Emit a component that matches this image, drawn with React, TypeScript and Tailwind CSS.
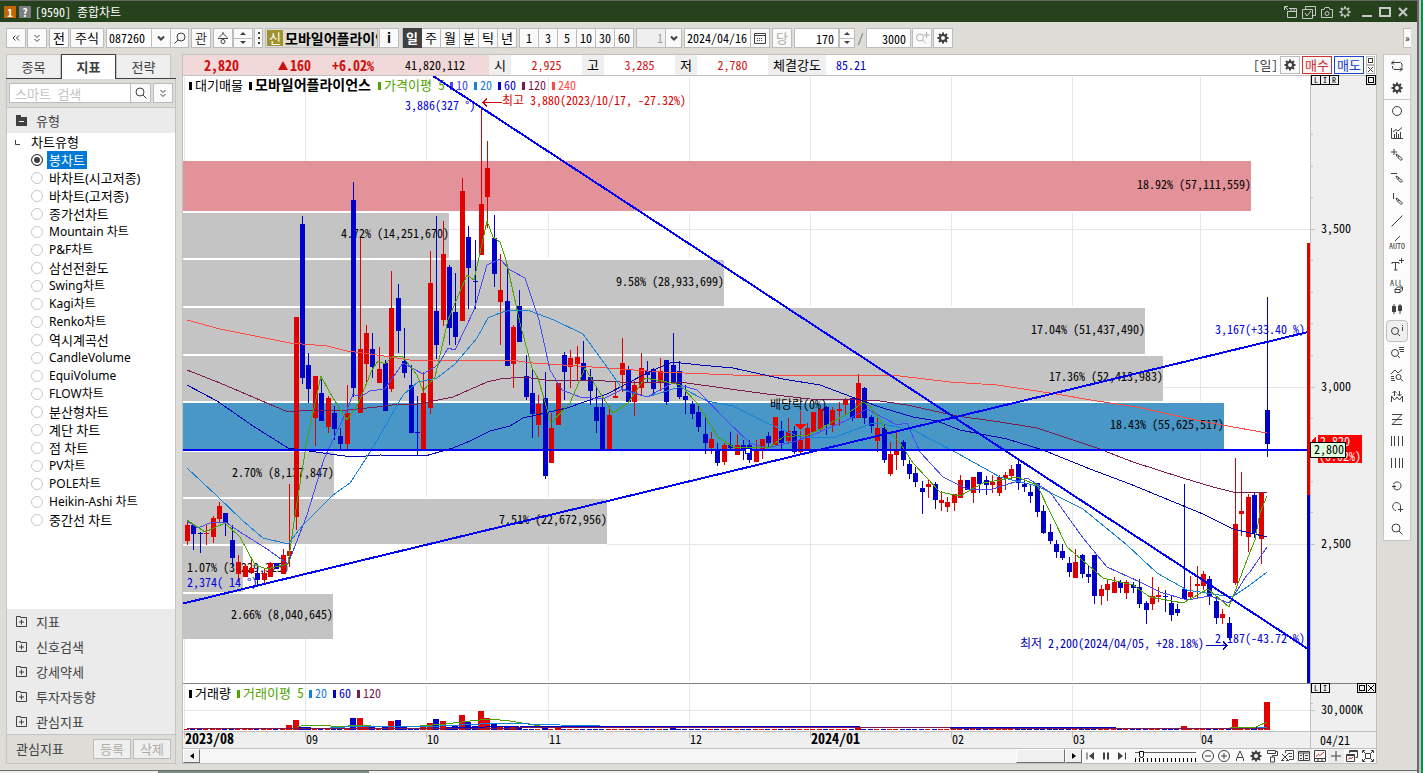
import { useState } from 'react';
import type { ReactNode } from 'react';
import clsx from 'clsx';

const INK = '#404040';
const UP = '#e00000';
const DOWN = '#0000c8';

const chartTypes = [
  '봉차트',
  '바차트(시고저종)',
  '바차트(고저종)',
  '종가선차트',
  'Mountain 차트',
  'P&F차트',
  '삼선전환도',
  'Swing차트',
  'Kagi차트',
  'Renko차트',
  '역시계곡선',
  'CandleVolume',
  'EquiVolume',
  'FLOW차트',
  '분산형차트',
  '계단 차트',
  '점 차트',
  'PV차트',
  'POLE차트',
  'Heikin-Ashi 차트',
  '중간선 차트',
];

const folders = ['지표', '신호검색', '강세약세', '투자자동향', '관심지표'];

// [up, body top, body bottom, high, low]
type Candle = [number, number, number, number, number];

const candles: Candle[] = [
  [1, 525, 541, 522, 545], [0, 525, 534, 525, 550], [0, 533, 534, 532, 553], [1, 533, 534, 525, 545], [1, 518, 537, 516, 543],
  [1, 506, 519, 502, 522], [0, 513, 523, 513, 536], [0, 540, 558, 525, 566], [1, 562, 574, 555, 582], [1, 566, 577, 565, 577],
  [1, 568, 573, 560, 574], [0, 573, 580, 569, 587], [1, 573, 580, 569, 583], [1, 563, 577, 562, 577], [0, 563, 569, 563, 569],
  [1, 555, 574, 549, 574], [1, 551, 556, 484, 567], [1, 317, 517, 317, 530], [0, 224, 378, 216, 384], [0, 365, 389, 353, 403],
  [1, 376, 418, 376, 446], [0, 393, 421, 379, 421], [1, 398, 427, 396, 433], [0, 413, 429, 406, 440], [0, 436, 444, 428, 449],
  [1, 413, 444, 385, 449], [0, 200, 388, 182, 397], [1, 349, 413, 238, 413], [1, 333, 364, 325, 383], [0, 349, 367, 333, 378],
  [1, 369, 383, 347, 383], [0, 363, 411, 360, 411], [1, 308, 389, 271, 392], [0, 298, 331, 284, 353], [0, 361, 373, 328, 378],
  [0, 385, 433, 365, 433], [0, 432, 433, 396, 455], [1, 393, 449, 372, 449], [1, 283, 408, 251, 414], [0, 311, 345, 216, 359],
  [1, 254, 320, 221, 326], [0, 267, 328, 265, 345], [0, 312, 337, 273, 345], [1, 191, 321, 178, 321], [0, 237, 268, 226, 309],
  [0, 281, 282, 240, 309], [1, 204, 255, 108, 255], [1, 168, 197, 141, 228], [0, 238, 274, 215, 287], [1, 290, 302, 254, 345],
  [0, 301, 366, 268, 366], [1, 327, 364, 325, 388], [0, 306, 342, 290, 342], [0, 376, 397, 355, 400], [0, 393, 414, 369, 438],
  [1, 404, 425, 395, 437], [0, 398, 476, 372, 479], [1, 428, 463, 413, 463], [1, 383, 425, 383, 425], [0, 355, 372, 352, 400],
  [1, 358, 367, 350, 388], [1, 357, 364, 346, 380], [0, 363, 380, 341, 380], [0, 377, 391, 369, 405], [0, 407, 421, 387, 433],
  [0, 407, 450, 399, 450], [1, 415, 450, 406, 450], [1, 396, 398, 382, 398], [1, 363, 375, 338, 392], [0, 370, 402, 366, 402],
  [1, 385, 402, 381, 416], [1, 368, 388, 353, 396], [0, 371, 375, 361, 382], [0, 369, 389, 368, 394], [1, 371, 382, 358, 391],
  [0, 360, 402, 360, 405], [0, 365, 382, 333, 382], [0, 371, 397, 361, 399], [0, 396, 400, 385, 414], [0, 404, 414, 401, 419],
  [0, 412, 427, 406, 432], [0, 434, 443, 417, 454], [1, 439, 448, 432, 454], [0, 450, 463, 443, 466], [1, 445, 462, 443, 465],
  [0, 445, 448, 432, 450], [1, 445, 455, 434, 455], [0, 445, 450, 440, 460], [0, 445, 460, 440, 463], [1, 450, 462, 440, 462],
  [1, 439, 450, 439, 459], [0, 436, 443, 432, 447], [1, 417, 445, 417, 445], [0, 431, 443, 421, 449], [1, 431, 441, 418, 443],
  [0, 431, 452, 426, 454], [1, 440, 452, 431, 454], [1, 428, 449, 423, 449], [1, 412, 432, 412, 432], [1, 409, 429, 409, 432],
  [0, 407, 425, 406, 435], [1, 410, 425, 407, 432], [1, 409, 411, 402, 426], [1, 400, 405, 398, 414], [0, 398, 418, 398, 421],
  [1, 383, 418, 374, 418], [0, 388, 418, 387, 424], [0, 417, 426, 415, 433], [1, 428, 441, 418, 452], [0, 428, 460, 425, 463],
  [1, 454, 474, 442, 476], [1, 450, 455, 432, 470], [0, 442, 460, 440, 466], [0, 464, 474, 460, 479], [0, 473, 482, 467, 487],
  [0, 488, 492, 481, 514], [1, 484, 487, 480, 498], [0, 484, 500, 482, 509], [1, 500, 503, 491, 511], [1, 502, 507, 497, 512],
  [1, 494, 503, 494, 511], [1, 480, 498, 475, 498], [0, 480, 490, 480, 490], [1, 477, 493, 477, 503], [0, 472, 484, 472, 493],
  [0, 480, 485, 476, 495], [1, 482, 485, 475, 493], [1, 477, 493, 475, 496], [1, 475, 478, 472, 490], [1, 469, 476, 465, 480],
  [0, 464, 483, 461, 490], [0, 484, 487, 478, 492], [0, 492, 496, 485, 503], [0, 483, 512, 483, 517], [0, 511, 533, 505, 534],
  [0, 532, 541, 524, 544], [0, 544, 552, 540, 558], [0, 551, 558, 544, 560], [0, 563, 572, 557, 577], [1, 562, 578, 549, 578],
  [0, 555, 574, 554, 578], [0, 574, 577, 565, 583], [0, 555, 596, 555, 604], [1, 589, 596, 585, 605], [1, 584, 590, 579, 601],
  [1, 582, 593, 577, 593], [0, 582, 588, 580, 593], [1, 582, 593, 580, 599], [0, 585, 588, 582, 593], [0, 587, 604, 579, 608],
  [0, 603, 610, 601, 624], [1, 596, 604, 577, 610], [1, 595, 597, 587, 602], [0, 596, 597, 590, 612], [0, 603, 615, 596, 621],
  [0, 609, 613, 604, 616], [0, 589, 599, 484, 599], [1, 592, 597, 576, 598], [1, 584, 586, 566, 599], [1, 574, 586, 571, 590],
  [0, 579, 597, 576, 605], [0, 601, 618, 597, 624], [1, 614, 618, 609, 624], [0, 623, 638, 617, 640], [1, 524, 583, 458, 585],
  [1, 511, 514, 472, 536], [1, 497, 537, 494, 552], [0, 495, 533, 492, 538], [1, 493, 539, 493, 564], [0, 410, 444, 297, 457],
];

const candleX = (i: number) => Math.round(187 + i * 6.39);

// volume bar heights, every other day is a flat 1px bar
const volumes: Record<number, number> = {
  16: 5, 17: 10, 18: 3, 19: 3, 25: 2, 26: 12, 27: 12, 28: 5, 29: 3, 31: 3, 32: 9, 33: 10, 34: 3,
  37: 3, 38: 7, 39: 11, 40: 9, 41: 3, 42: 4, 43: 15, 44: 8, 45: 4, 46: 19, 47: 12, 48: 6, 49: 4, 50: 4,
  51: 3, 52: 3, 56: 4, 58: 4, 76: 3, 105: 2, 156: 4, 164: 11, 167: 3, 169: 28,
};

// days that closed below their open but above the previous close
const gapUpDays = [156, 169];

const averages = [
  { color: '#ff4a44', points: '187,320 220,329 290,343 327,346 347,351 377,355 410,360 510,360 533,363 607,368 660,372 733,375 877,375 900,376 950,382 997,385 1050,393 1097,401 1137,407 1200,421 1250,430 1267,433' },
  { color: '#7b1c4f', points: '187,370 220,383 288,412 313,410 347,410 377,407 400,404 418,404 453,397 487,382 500,379 523,377 553,381 590,380 620,382 680,382 730,389 767,394 810,399 860,400 880,401 907,405 957,416 1000,422 1037,428 1097,448 1133,462 1183,478 1213,487 1233,492 1267,492' },
  { color: '#0000b4', points: '187,385 217,401 253,426 288,448 330,454 352,457 380,455 425,456 453,448 470,441 490,431 510,426 523,418 567,408 607,394 647,373 672,362 700,365 733,368 783,379 820,385 860,400 883,408 913,417 937,421 960,430 1007,439 1043,450 1090,469 1130,484 1203,514 1233,529 1267,537' },
  { color: '#1482d8', points: '187,468 217,496 243,521 263,538 288,544 303,525 333,495 350,483 367,457 383,430 403,395 418,382 437,378 455,364 477,338 488,318 500,313 510,310 530,311 554,320 583,334 607,367 623,390 647,397 680,387 707,401 733,406 767,423 800,437 833,438 870,424 877,423 913,430 957,453 1000,477 1037,486 1083,509 1127,545 1157,573 1187,590 1232,597 1250,585 1267,572' },
  { color: '#4848f4', points: '187,521 198,528 212,522 227,523 240,532 267,549 288,564 307,515 324,459 347,410 353,394 360,397 370,391 385,389 403,363 423,374 438,365 448,348 455,350 474,310 487,265 500,259 510,270 525,278 539,320 550,370 562,390 580,397 603,399 623,389 647,397 673,383 697,390 727,421 750,443 767,448 793,442 813,435 847,420 867,409 897,425 907,423 920,452 943,477 967,489 993,489 1027,478 1050,492 1083,538 1107,567 1140,582 1160,592 1187,600 1210,596 1229,603 1247,575 1250,572 1267,547' },
  { color: '#4ea200', points: '187,520 205,532 225,523 240,537 255,565 267,569 288,564 295,515 307,440 321,376 330,393 347,420 358,404 372,370 378,361 385,364 393,356 403,357 417,375 423,391 435,377 448,320 467,275 474,280 487,221 493,237 500,242 506,260 520,323 532,368 538,378 551,423 570,403 585,368 600,393 613,413 628,403 645,378 667,382 680,385 697,403 718,437 733,447 770,447 783,437 808,435 820,429 850,412 863,402 870,406 887,430 900,443 913,463 940,492 960,496 983,483 1017,477 1037,485 1067,547 1103,578 1133,585 1150,597 1183,603 1208,589 1229,607 1242,573 1250,552 1255,540 1260,513 1267,496' },
];

const profile = [
  { y: 161, h: 50, end: 1251, fill: '#e4929a', label: '18.92% (57,111,559)' },
  { y: 213, h: 45, end: 449, fill: '#c4c4c4', label: '4.72% (14,251,670)' },
  { y: 260, h: 46, end: 724, fill: '#c4c4c4', label: '9.58% (28,933,699)' },
  { y: 308, h: 46, end: 1145, fill: '#c4c4c4', label: '17.04% (51,437,490)' },
  { y: 356, h: 45, end: 1163, fill: '#c4c4c4', label: '17.36% (52,413,983)' },
  { y: 403, h: 46, end: 1224, fill: '#4897c7', label: '18.43% (55,625,517)' },
  { y: 452, h: 45, end: 334, fill: '#c4c4c4', label: '2.70% (8,137,847)' },
  { y: 499, h: 45, end: 607, fill: '#c4c4c4', label: '7.51% (22,672,956)' },
  { y: 546, h: 46, end: 243, fill: '#c4c4c4', label: '1.07% (3,229,325)' },
  { y: 594, h: 45, end: 333, fill: '#c4c4c4', label: '2.66% (8,040,645)' },
];

const months = [
  { x: 184, label: '2023/08', bold: true },
  { x: 305, label: '09' },
  { x: 426, label: '10' },
  { x: 548, label: '11' },
  { x: 689, label: '12' },
  { x: 810, label: '2024/01', bold: true },
  { x: 951, label: '02' },
  { x: 1072, label: '03' },
  { x: 1200, label: '04' },
];

interface LegendItem {
  x: number;
  label: string;
  color: string;
  size?: number;
  bold?: boolean;
}

const priceLegend: LegendItem[] = [
  { x: 189, label: '대기매물', color: '#000000', size: 13 },
  { x: 249, label: '모바일어플라이언스', color: '#000000', size: 14, bold: true },
  { x: 378, label: '가격이평 5', color: '#4ea200', size: 13 },
  { x: 450, label: '10', color: '#4848f4' },
  { x: 474, label: '20', color: '#1482d8' },
  { x: 498, label: '60', color: '#0000c8' },
  { x: 522, label: '120', color: '#7b1c4f' },
  { x: 552, label: '240', color: '#ff4a44' },
];

const volumeLegend: LegendItem[] = [
  { x: 189, label: '거래량', color: '#000000', size: 13 },
  { x: 237, label: '거래이평 5', color: '#4ea200', size: 13 },
  { x: 309, label: '20', color: '#1482d8' },
  { x: 333, label: '60', color: '#0000c8' },
  { x: 357, label: '120', color: '#7b1c4f' },
];

const Legend = ({ items, y }: { items: LegendItem[]; y: number }) => (
  <g>
    {items.map((item) => (
      <g key={item.label} fill={item.color}>
        <rect x={item.x} y={y - 8} width="3" height="8" />
        <text x={item.x + 6} y={y} fontSize={item.size ?? 12} fontWeight={item.bold ? 700 : 400}>
          {item.label}
        </text>
      </g>
    ))}
  </g>
);

const PriceChart = () => (
  <svg viewBox="183 76 1193 607" className="block h-auto w-full" fontSize="12" shapeRendering="crispEdges" role="img" aria-label="모바일어플라이언스 일봉">
    <rect x="183" y="76" width="1127" height="607" fill="#fff" />
    <g fill="#e6e6e6">
      {months.map((m) => (
        <rect key={m.x} x={m.x} y="77" width="1" height="604" />
      ))}
      {[229, 387, 544].map((y) => (
        <rect key={y} x="183" y={y} width="1127" height="1" />
      ))}
    </g>

    {profile.map((bar) => (
      <rect key={bar.y} x="183" y={bar.y} width={bar.end - 183} height={bar.h} fill={bar.fill} />
    ))}
    {profile.slice(1).map((bar, i) => (
      <rect key={bar.y} x="183" y={bar.y - 2} width={Math.max(bar.end, profile[i].end) - 183} height="2" fill="#fff" />
    ))}
    {profile.map((bar) => (
      <text key={bar.label} x={Math.max(bar.end, 289)} y={Math.floor(bar.y + bar.h / 2) + 3} textAnchor="end">
        {bar.label}
      </text>
    ))}

    <Legend items={priceLegend} y={90} />

    {candles.map(([up, top, bottom, high, low], i) => (
      <g key={i} fill={up ? UP : DOWN}>
        <rect x={candleX(i)} y={high} width="1" height={low - high} />
        <rect x={candleX(i) - 2} y={top} width="5" height={bottom - top} />
      </g>
    ))}
    {averages.map((line) => (
      <polyline key={line.color} points={line.points} fill="none" stroke={line.color} strokeWidth="1" />
    ))}

    <g stroke="#0000fa" strokeWidth="2">
      <path d="M183 450H1308" />
      <path d="M183 603.5L1308 332" />
      <path d="M433 76L1308 649" />
    </g>
    <rect x="745" y="448" width="5" height="5" fill="#fff" stroke="#0000fa" />

    <g fill="#0000e0">
      <text x="405" y="110">3,886(327 °)</text>
      <text x="187" y="587">2,374( 14 °)</text>
      <text x="1215" y="334">3,167(+33.40 %)</text>
      <text x="1215" y="643">2,187(-43.72 %)</text>
    </g>
    <text x="502" y="105" fill="#d80000">최고 3,880(2023/10/17, -27.32%)</text>
    <path d="M502 102.500H483M487 98.500L483 102.500L487 106.500" fill="none" stroke="#d80000" />
    <text x="1020" y="648" fill="#0000b4">최저 2,200(2024/04/05, +28.18%)</text>
    <path d="M1206 645.500H1227M1223 641.500L1227 645.500L1223 649.500" fill="none" stroke="#0000b4" />
    <text x="770" y="409">배당락(0%)</text>
    <path d="M800 411H801V424H806L801 430H800L795 424H800Z" fill="#ff0000" />

    <rect x="1307" y="243" width="3" height="252" fill={UP} />
    <rect x="1307" y="495" width="3" height="188" fill={DOWN} />

    {/* price axis */}
    <rect x="1310" y="76" width="66" height="607" fill="#efefef" />
    <rect x="1310" y="76" width="1" height="607" fill="#c0c0c0" />
    <g fill="#c0c0c0">
      {[134, 166, 197, 260, 292, 323, 355, 418, 481, 512].map((y) => (
        <rect key={y} x="1311" y={y} width="2" height="1" />
      ))}
      {[229, 387, 544].map((y) => (
        <rect key={y} x="1311" y={y} width="4" height="1" />
      ))}
    </g>
    <text x="1321" y="233">3,500</text>
    <text x="1321" y="391">3,000</text>
    <text x="1321" y="548">2,500</text>
    <path d="M1311 441L1316 437V445Z" fill="#ff0000" />
    <rect x="1318" y="435" width="44" height="28" fill="#ff0000" />
    <text x="1320" y="446" fill="#fff">2,820</text>
    <text x="1319" y="461" fill="#fff">(6.02%)</text>
    <rect x="1310.500" y="442.500" width="35" height="15" fill="#dfffdf" stroke="#000" />
    <text x="1314" y="454">2,800</text>
  </svg>
);

const VolumeChart = () => (
  <svg viewBox="183 684 1193 47" className="block h-auto w-full" fontSize="12" shapeRendering="crispEdges" role="img" aria-label="거래량">
    <rect x="183" y="684" width="1127" height="47" fill="#fff" />
    <g fill="#e6e6e6">
      {months.map((m) => (
        <rect key={m.x} x={m.x} y="685" width="1" height="46" />
      ))}
      <rect x="183" y="710" width="1127" height="1" />
    </g>
    <Legend items={volumeLegend} y={698} />
    {candles.map(([up], i) => {
      const h = volumes[i] ?? 1;
      const fill = up || gapUpDays.includes(i) ? UP : DOWN;
      return <rect key={i} x={candleX(i) - 3} y={730 - h} width={h > 1 ? 6 : 5} height={h} fill={fill} />;
    })}
    <g fill="none">
      <path d="M297 727L305 725H322L340 727L356 725L385 727L420 726L445 724L470 721L490 719L510 721L540 726L590 727M1230 727H1256L1267 722" stroke="#4ea200" />
      <path d="M330 728L360 726L440 726L500 723L560 725L640 727M1257 727H1267" stroke="#1482d8" />
      <path d="M450 728L520 726L700 726L860 727H1116" stroke="#0000c8" />
      <path d="M187 728.500H440L600 727.500H900L1000 728.500H1267" stroke="#7b1c4f" />
    </g>
    <rect x="1310" y="684" width="66" height="47" fill="#efefef" />
    <g fill="#c0c0c0">
      <rect x="1310" y="684" width="1" height="47" />
      <rect x="1311" y="703" width="2" height="1" />
      <rect x="1311" y="710" width="4" height="1" />
    </g>
    <text x="1321" y="714">30,000K</text>
  </svg>
);

const DateAxis = () => (
  <svg viewBox="183 732 1193 16" className="block h-auto w-full overflow-visible" fontSize="12" shapeRendering="crispEdges" role="img" aria-label="날짜">
    <rect x="183" y="732" width="1193" height="16" fill="#efefef" />
    {months.map((m) => (
      <g key={m.x}>
        <rect x={m.x} y="732" width="1" height="6" fill="#c0c0c0" />
        <text x={m.x + 1} y="744" fontSize={m.bold ? 14 : 12} fontWeight={m.bold ? 700 : 400}>
          {m.label}
        </text>
      </g>
    ))}
    <rect x="1310" y="732" width="1" height="16" fill="#c0c0c0" />
    <text x="1320" y="745">04/21</text>
  </svg>
);

interface GlyphProps {
  children: ReactNode;
  className?: string;
}

const Glyph = ({ children, className }: GlyphProps) => (
  <svg viewBox="0 0 16 16" className={clsx('block size-4 shrink-0', className)} fill="none" stroke="currentColor" strokeWidth="1">
    {children}
  </svg>
);

const Gear = ({ className }: { className?: string }) => (
  <Glyph className={className}>
    <circle cx="8" cy="8" r="3" strokeWidth="2" />
    <path d="M8 2.500V5M8 11V13.500M2.500 8H5M11 8H13.500M4 4L6 6M10 10L12 12M12 4L10 6M6 10L4 12" strokeWidth="2" />
  </Glyph>
);

const Magnifier = ({ className }: { className?: string }) => (
  <Glyph className={className}>
    <circle cx="7" cy="7" r="4" />
    <path d="M10 10L13.500 13.500" />
  </Glyph>
);

const DoubleDown = () => (
  <Glyph>
    <path d="M5.500 5L8 7.500L10.500 5M5.500 9L8 11.500L10.500 9" />
  </Glyph>
);

const Caret = () => (
  <Glyph>
    <path d="M5 6.500L8 9.500L11 6.500" strokeWidth="2" />
  </Glyph>
);

interface ToolButtonProps {
  children: ReactNode;
  className?: string;
  label?: string;
}

const ToolButton = ({ children, className = 'w-5', label }: ToolButtonProps) => (
  <button
    type="button"
    aria-label={label}
    className={clsx('flex h-5 shrink-0 items-center justify-center border border-[#bcbcbc] bg-[#fafafa] text-[13px]', className)}
  >
    {children}
  </button>
);

const Spinner = ({ className }: { className?: string }) => (
  <div className={clsx('flex h-5 shrink-0 flex-col border border-[#bcbcbc] bg-[#fafafa] text-[#404040]', className)}>
    <button type="button" aria-label="증가" className="flex flex-1 items-center justify-center border-b border-[#bcbcbc]">
      <svg viewBox="0 0 6 3" className="h-[3px] w-[6px]" fill="currentColor"><path d="M0 3L3 0L6 3Z" /></svg>
    </button>
    <button type="button" aria-label="감소" className="flex flex-1 items-center justify-center">
      <svg viewBox="0 0 6 3" className="h-[3px] w-[6px]" fill="currentColor"><path d="M0 0L3 3L6 0Z" /></svg>
    </button>
  </div>
);

const TitleBar = () => (
  <header className="flex h-[22px] items-center border-t border-[#666] bg-[#26421c] pl-1 text-white">
    <span className="flex h-3 w-3 items-center justify-center bg-[#c86400] text-[11px] leading-3 font-bold">1</span>
    <span className="ml-[3px] flex h-3 w-3 items-center justify-center bg-[#7c7c7c] text-[11px] leading-3 font-bold">?</span>
    <h1 className="ml-1 flex-1 leading-4">[9590] 종합차트</h1>
    <div className="flex items-center gap-[2px] pr-[6px] text-[#c8c8c8]">
      <button type="button" aria-label="새 창"><Glyph><path d="M1.500 6V2.500H5M1.500 2.500L5 6M6 4.500H13.500V13.500H4.500V7M4.500 7.500H13.500M8 4.500V7M11 4.500V7" /></Glyph></button>
      <button type="button" aria-label="창 선택"><Glyph><path d="M4.500 5V2.500H14.500V11.500H12M1.500 5.500H11.500V14.500H1.500ZM4 9L6 12L10 7" /></Glyph></button>
      <button type="button" aria-label="캡처"><Glyph><path d="M2.500 5.500H5L6 3.500H10L11 5.500H13.500V13.500H2.500Z" /><circle cx="8" cy="9.500" r="2" /></Glyph></button>
      <button type="button" aria-label="설정"><Glyph><circle cx="8" cy="8" r="3.500" /><path d="M8 2.500V4M8 12V13.500M2.500 8H4M12 8H13.500M4 4L5.500 5.500M10.500 10.500L12 12M12 4L10.500 5.500M5.500 10.500L4 12" strokeWidth="2" /></Glyph></button>
      <button type="button" aria-label="최소화" className="ml-1"><Glyph><path d="M3 12H13" strokeWidth="2" /></Glyph></button>
      <button type="button" aria-label="최대화"><Glyph><path d="M3 4H13V12H3Z" strokeWidth="2" /></Glyph></button>
      <button type="button" aria-label="닫기"><Glyph><path d="M4 4L12 12M12 4L4 12" strokeWidth="2" /></Glyph></button>
    </div>
  </header>
);

const Toolbar = () => {
  const [period, setPeriod] = useState('일');

  return (
    <div className="flex items-center py-[6px] pl-[6px] text-black">
      <ToolButton className="w-5 text-[#404040]" label="이전"><Glyph><path d="M7.500 5.500L5 8L7.500 10.500M11 5.500L8.500 8L11 10.500" /></Glyph></ToolButton>
      <ToolButton className="ml-px w-5 text-[#404040]" label="펼치기"><DoubleDown /></ToolButton>
      <ToolButton className="ml-[2px] w-5">전</ToolButton>
      <ToolButton className="ml-px w-[34px]">주식</ToolButton>

      <div className="ml-[2px] flex h-5 shrink-0 border border-[#bcbcbc] bg-white">
        <input aria-label="종목코드" defaultValue="087260" className="w-[44px] pl-[2px] outline-none" />
        <button type="button" aria-label="종목 목록" className="flex w-[19px] items-center justify-center border-l border-[#bcbcbc] bg-[#fafafa] text-[#404040]"><Caret /></button>
        <button type="button" aria-label="종목 검색" className="flex w-[18px] items-center justify-center border-l border-[#bcbcbc] bg-[#fafafa] text-[#404040]">
          <Magnifier className="-scale-x-100" />
        </button>
      </div>
      <ToolButton className="ml-[2px] w-5 text-[#404040]">관</ToolButton>
      <ToolButton className="ml-[2px] w-5 text-[#404040]" label="순환">
        <Glyph><path d="M3 8.500H13M4 7.500L8 3.500L12 7.500M8 2V4" /><circle cx="8" cy="11.500" r="2" /></Glyph>
      </ToolButton>
      <Spinner className="w-5" />
      <ToolButton className="ml-px w-[9px] text-[#404040]" label="더보기">
        <svg viewBox="0 0 2 12" className="h-3 w-[2px]" fill="currentColor"><path d="M0 0H2V2H0ZM0 5H2V7H0ZM0 10H2V12H0Z" /></svg>
      </ToolButton>

      <button type="button" className="ml-[2px] flex h-5 w-[113px] shrink-0 items-center overflow-hidden border border-[#bcbcbc] bg-[#dddcd7]">
        <span className="ml-px flex size-4 shrink-0 items-center justify-center bg-[#a0922c] text-[13px] text-white">신</span>
        <span className="ml-[2px] text-[14px] font-bold whitespace-nowrap">모바일어플라이언스</span>
      </button>
      <ToolButton className="ml-px w-5 font-bold">i</ToolButton>

      <div className="ml-[3px] flex shrink-0 border-l border-[#bcbcbc]">
        {['일', '주', '월', '분', '틱', '년'].map((p) => (
          <button
            key={p}
            type="button"
            onClick={() => setPeriod(p)}
            className={clsx(
              'h-5 w-[19px] border-y border-r text-[13px]',
              p === period ? 'border-[#404040] bg-[#404040] font-bold text-white' : 'border-[#bcbcbc] bg-[#fafafa]',
            )}
          >
            {p}
          </button>
        ))}
      </div>
      <div className="ml-[2px] flex shrink-0 border-l border-[#bcbcbc]">
        {['1', '3', '5', '10', '30', '60'].map((n) => (
          <button key={n} type="button" className="h-5 w-[19px] border-y border-r border-[#bcbcbc] bg-[#fafafa]">
            {n}
          </button>
        ))}
      </div>

      <div className="ml-[2px] flex h-5 w-[46px] shrink-0 border border-[#bcbcbc]">
        <select aria-label="주기" className="flex-1 appearance-none bg-[#efefef] pl-[20px] text-[#a0a0a0] outline-none">
          <option>1</option>
        </select>
        <span className="flex w-4 items-center justify-center border-l border-[#bcbcbc] bg-[#fafafa] text-[#404040]"><Caret /></span>
      </div>

      <div className="ml-[2px] flex h-5 shrink-0 border border-[#bcbcbc] bg-white">
        <input aria-label="기준일" defaultValue="2024/04/16" className="w-[65px] pl-[2px] outline-none" />
        <button type="button" aria-label="달력" className="flex w-[19px] items-center justify-center border-l border-[#bcbcbc] bg-[#fafafa] text-[#404040]">
          <Glyph><path d="M2.500 3.500H13.500V13.500H2.500ZM2.500 5.500H13.500" /><path d="M5 8.500H11M5 10.500H11" strokeDasharray="1 1" /></Glyph>
        </button>
      </div>
      <ToolButton className="ml-[2px] w-5 text-[#b0aca4]">당</ToolButton>
      <input aria-label="표시 봉수" defaultValue="170" className="ml-[2px] h-5 w-[45px] shrink-0 border border-[#bcbcbc] bg-white pr-1 text-right outline-none" />
      <Spinner className="w-4" />
      <span className="w-[11px] text-center text-[#606060]">/</span>
      <input aria-label="전체 봉수" defaultValue="3000" className="h-5 w-[45px] shrink-0 border border-[#bcbcbc] bg-white pr-1 text-right outline-none" />
      <ToolButton className="ml-px w-5 text-[#b0b0b0]" label="확대">
        <Glyph><circle cx="6" cy="7.500" r="3.500" /><path d="M8.500 10L12 13.500M12.500 2V8M9.500 5H15.500" /></Glyph>
      </ToolButton>
      <ToolButton className="ml-px w-5 text-[#404040]" label="환경설정"><Gear /></ToolButton>
      <button type="button" aria-label="도구 더보기" className="mr-[6px] ml-auto flex h-5 w-2 items-center justify-center border border-r-0 border-[#bcbcbc] bg-[#fafafa] text-[10px]">»</button>
    </div>
  );
};

const Sidebar = () => {
  const [selected, setSelected] = useState('봉차트');

  return (
    <aside className="flex w-[170px] shrink-0 flex-col text-[13px] text-[#404040]">
      <div className="flex h-[25px] shrink-0 border-b border-[#404040]">
        <button type="button" className="w-[55px] border border-b-0 border-[#c4c4c4] bg-[#efefef]">종목</button>
        <button type="button" className="-mb-px w-[55px] border border-b-0 border-[#404040] bg-white font-bold">지표</button>
        <button type="button" className="w-[55px] border border-b-0 border-[#c4c4c4] bg-[#efefef]">전략</button>
      </div>
      <div className="flex flex-1 flex-col border-x border-b border-[#c4c4c4]">
        <div className="flex h-[28px] items-center px-[2px]">
          <input
            aria-label="지표 검색"
            placeholder="스마트 검색"
            className="h-5 w-[122px] border border-[#bcbcbc] bg-white pl-[5px] outline-none placeholder:text-[#c4c4c4]"
          />
          <ToolButton className="w-5 border-l-0" label="검색"><Magnifier /></ToolButton>
          <ToolButton className="ml-[2px] w-5" label="펼치기"><DoubleDown /></ToolButton>
        </div>

        <button type="button" className="flex h-[26px] items-center border-t border-[#c4c4c4] bg-[#ebebeb] pl-[9px]">
          <svg viewBox="0 0 11 11" className="size-[11px]" fill={INK}><path d="M0 0H5V2H11V11H0Z" /><path d="M3 6H8V7H3Z" fill="#fff" /></svg>
          <span className="ml-[9px]">유형</span>
        </button>

        <div className="flex-1 bg-white text-black [font-family:'Noto_Sans','Noto_Sans_Mono_CJK_KR','Noto_Sans_CJK_KR',sans-serif]">
          <div className="flex h-[18px] items-center pl-2">
            <svg viewBox="0 0 5 5" className="size-[5px]" fill="none" stroke={INK}><path d="M.5 0V4.500H5" /></svg>
            <span className="ml-[11px]">차트유형</span>
          </div>
          {chartTypes.map((name) => (
            <label key={name} className="flex h-[18px] items-center pl-6">
              <input
                type="radio"
                name="chartType"
                checked={name === selected}
                onChange={() => setSelected(name)}
                className="size-3 shrink-0 appearance-none rounded-full border border-[#c8c8c8] bg-white checked:border-[#404040] checked:bg-[#404040] checked:shadow-[inset_0_0_0_2px_#fff]"
              />
              <span
                className={clsx(
                  'ml-1 px-[2px] leading-[18px]',
                  /[A-Za-z]/.test(name) ? 'text-[12px]' : 'text-[13px]',
                  name === selected && 'bg-[#0078d7] text-white',
                )}
              >
                {name}
              </span>
            </label>
          ))}
        </div>

        <div className="bg-[#ebebeb]">
          {folders.map((name) => (
            <button key={name} type="button" className="flex h-[25px] w-full items-center pl-[9px]">
              <svg viewBox="0 0 11 11" className="size-[11px]" fill="none" stroke={INK}>
                <path d="M.5 .5H4.500V1.500H10.500V10.500H.5ZM3 6H8M5.500 3.500V8.500" />
              </svg>
              <span className="ml-[9px]">{name}</span>
            </button>
          ))}
        </div>
        <div className="flex h-[29px] items-center border-t border-[#c4c4c4] pl-[9px]">
          <span className="flex-1">관심지표</span>
          <button type="button" className="h-5 w-[38px] border border-[#bcbcbc] bg-[#efefef] text-[#b0aca4]">등록</button>
          <button type="button" className="mr-1 ml-[2px] h-5 w-[38px] border border-[#bcbcbc] bg-[#efefef] text-[#b0aca4]">삭제</button>
        </div>
      </div>
    </aside>
  );
};

const QuoteCell = ({ label, value }: { label: string; value: string }) => (
  <>
    <span className="flex w-[22px] shrink-0 items-center justify-center bg-[#efefef] text-[13px]">{label}</span>
    <span className="flex w-[71px] shrink-0 items-center justify-center text-[#d01010]">{value}</span>
  </>
);

const QuoteBar = () => (
  <div className="flex h-[21px] border-b border-[#c0c0c0] bg-white text-black">
    <div className="flex w-[306px] shrink-0 items-center bg-[#f1d9d9] text-[14px] font-bold text-[#d01010]">
      <span className="w-[56px] text-right">2,820</span>
      <span className="flex w-[72px] items-center justify-end">
        <svg viewBox="0 0 10 9" className="h-[9px] w-[10px]" fill="currentColor"><path d="M5 0L10 9H0Z" /></svg>
        <span className="ml-[2px]">160</span>
      </span>
      <span className="w-[63px] text-right">+6.02%</span>
      <span className="w-[91px] text-right text-[12px] font-normal text-black">41,820,112</span>
    </div>
    <QuoteCell label="시" value="2,925" />
    <QuoteCell label="고" value="3,285" />
    <QuoteCell label="저" value="2,780" />
    <span className="flex w-[58px] shrink-0 items-center justify-center bg-[#efefef] text-[13px]">체결강도</span>
    <span className="ml-[10px] flex flex-1 items-center text-[#0000c0]">85.21</span>
    <div className="flex items-center gap-[2px] text-[13px]">
      <span className="text-[#404040]">[일]</span>
      <button type="button" aria-label="차트 설정" className="flex h-[18px] w-5 items-center justify-center border border-[#bcbcbc] bg-[#fafafa] text-[#404040]"><Gear /></button>
      <button type="button" className="flex h-[18px] w-[30px] items-center justify-center border border-[#d03030] bg-[#f8f8f8] text-[#d03030]">매수</button>
      <button type="button" className="flex h-[18px] w-[30px] items-center justify-center border border-[#2040d0] bg-[#f8f8f8] text-[#2040d0]">매도</button>
      <div className="mr-px flex flex-col">
        <button type="button" aria-label="최대화" className="flex size-[9px] items-center justify-center border border-[#bcbcbc]"><span className="size-[5px] border border-[#404040]" /></button>
        <button type="button" aria-label="닫기" className="flex size-[9px] items-center justify-center border border-[#bcbcbc]">
          <svg viewBox="0 0 5 5" className="size-[5px]" stroke={INK}><path d="M0 0L5 5M5 0L0 5" /></svg>
        </button>
      </div>
    </div>
  </div>
);

const PaneButton = ({ children, label }: { children?: ReactNode; label: string }) => (
  <button type="button" aria-label={label} className="-ml-px flex h-[10px] w-[10px] items-center justify-center border border-black bg-[#efefef] text-[8px] leading-[8px] text-black">
    {children}
  </button>
);

const PaneControls = ({ letters, closable }: { letters: string[]; closable?: boolean }) => (
  <div className="absolute -top-px right-0 flex w-[65px] justify-between">
    <div className="flex pl-px">
      {letters.map((l) => (
        <PaneButton key={l} label={l}>{l}</PaneButton>
      ))}
    </div>
    <div className="flex">
      <PaneButton label="최대화"><span className="size-[6px] border border-black" /></PaneButton>
      {closable && (
        <PaneButton label="닫기">
          <svg viewBox="0 0 6 6" className="size-[6px]" stroke="#000"><path d="M0 0L6 6M6 0L0 6" /></svg>
        </PaneButton>
      )}
    </div>
  </div>
);

const footerTools = [
  { name: '축소', icon: <><circle cx="8" cy="8" r="5.500" /><path d="M5 8H11" /></> },
  { name: '확대', icon: <><circle cx="8" cy="8" r="5.500" /><path d="M5 8H11M8 5V11" /></> },
  { name: '글자', icon: <path d="M4.500 13V11L8 3L11.500 11V13M5.500 9.500H10.500" /> },
  { name: '설정', icon: <><circle cx="8" cy="8" r="3" strokeWidth="2" /><path d="M8 2.500V5M8 11V13.500M2.500 8H5M11 8H13.500M4 4L6 6M10 10L12 12M12 4L10 6M6 10L4 12" strokeWidth="2" /></> },
  { name: '서식', icon: <path d="M3.500 2.500H11.500V5.500H3.500ZM11.500 3.500H13.500V7.500H8.500V9M6.500 9H10.500V14H6.500Z" /> },
  { name: '엑셀', icon: <path d="M5.500 5V2.500H13.500V11.500H9M8 5.500H12M9 8.500H12M2 6L8 12M8 6L2 12M1 12.500H4M6 12.500H9" /> },
  { name: '표', active: true, icon: <path d="M2.500 3.500H13.500V12.500H2.500ZM2.500 5H13.500M7.500 5V12.500M4 7.500H6M4 10.500H6M9 7.500H12M9 10.500H12" /> },
  { name: '지표', icon: <><path d="M2.500 2.500H13.500V13.500H2.500ZM2.500 10.500H13.500M6 10.500V13.500M10 10.500V13.500" /><path d="M4 8.500L6.500 6.500L8 7.500L12 4" stroke="#c03030" /></> },
  { name: '십자선', active: true, icon: <path d="M8 3V13M3 8H13" /> },
  { name: '새 차트', icon: <><path d="M5.500 5V2.500H13.500V9.500H11.500M5 3.500H14M2.500 6.500H10.500V13.500H2.500ZM2 7.500H11" /><path d="M4 11.500L6 9.500L7 11L9 9" stroke="#c03030" /></> },
  { name: '전체화면', icon: <path d="M2.500 5V2.500H5M11 2.500H13.500V5M13.500 11V13.500H11M5 13.500H2.500V11M5.500 5.500H10.500V10.500H5.500ZM3 3L5 5M13 3L11 5M13 13L11 11M3 13L5 11" /> },
];

const ScrollBar = () => (
  <div className="flex h-[14px] items-center bg-[#fafafa] text-[#404040]">
    <button type="button" aria-label="왼쪽으로" className="flex h-[14px] w-[17px] items-center justify-center border border-t-white border-r-[#707070] border-b-[#707070] border-l-white bg-[#f0f0f0]">
      <svg viewBox="0 0 4 6" className="h-[6px] w-1" fill="#000"><path d="M4 0V6L0 3Z" /></svg>
    </button>
    <div className="flex h-[14px] flex-1 justify-end bg-[#f6f6f6]">
      <div className="h-[14px] w-[49px] border border-t-white border-r-[#707070] border-b-[#707070] border-l-white bg-[#f0f0f0]" />
    </div>
    <button type="button" aria-label="오른쪽으로" className="flex h-[14px] w-[17px] items-center justify-center border border-t-white border-r-[#707070] border-b-[#707070] border-l-white bg-[#f0f0f0]">
      <svg viewBox="0 0 4 6" className="h-[6px] w-1" fill="#000"><path d="M0 0V6L4 3Z" /></svg>
    </button>
    <div className="flex w-[53px] items-center">
      <button type="button" aria-label="처음"><Glyph><path d="M5 4.500V11.500" /><path d="M12 4V12L7 8Z" fill="currentColor" stroke="none" /></Glyph></button>
      <button type="button" aria-label="일시정지"><Glyph><path d="M6 4.500V11.500M10 4.500V11.500" strokeWidth="2" /></Glyph></button>
      <button type="button" aria-label="마지막"><Glyph><path d="M11.500 4.500V11.500" /><path d="M4 4V12L9 8Z" fill="currentColor" stroke="none" /></Glyph></button>
    </div>
    <div className="flex w-[61px] flex-col">
      <input
        type="range"
        aria-label="재생 속도"
        min="0"
        max="16"
        defaultValue="1"
        className="h-2 w-full appearance-none bg-[linear-gradient(#606060,#606060)] bg-[length:100%_1px] bg-[position:0_2px] bg-no-repeat [&::-webkit-slider-thumb]:h-[7px] [&::-webkit-slider-thumb]:w-[5px] [&::-webkit-slider-thumb]:appearance-none [&::-webkit-slider-thumb]:rounded-b-full [&::-webkit-slider-thumb]:border [&::-webkit-slider-thumb]:border-black [&::-webkit-slider-thumb]:bg-white"
      />
      <div className="h-[4px] bg-[repeating-linear-gradient(90deg,#000_0_1px,transparent_1px_4px)]" />
    </div>
    <div className="flex pl-1">
      {footerTools.map((tool) => (
        <button key={tool.name} type="button" aria-label={tool.name} className={clsx('h-[14px] overflow-hidden', tool.active && 'bg-[#ececec]')}>
          <Glyph className="-my-px">{tool.icon}</Glyph>
        </button>
      ))}
    </div>
  </div>
);

const ChartPanel = () => (
  <main className="ml-[6px] min-w-0 flex-1 self-start border border-[#c0c0c0]">
    <QuoteBar />
    <div className="relative">
      <PriceChart />
      <PaneControls letters={['L', 'I', 'R']} />
    </div>
    <div className="relative border-t border-[#808080]">
      <VolumeChart />
      <PaneControls letters={['L', 'I']} closable />
    </div>
    <div className="border-y border-[#c0c0c0]">
      <DateAxis />
    </div>
    <ScrollBar />
  </main>
);

const drawTools = [
  { name: '원', icon: <circle cx="8" cy="8" r="4.500" /> },
  { name: '차트 도구', icon: <path d="M2.500 3V13.500H14M5.500 13V9M7.500 13V7M9.500 13V9M11.500 13V7M4 7L7 4.500L9 6L13 2.500" /> },
  { name: '십자 편집', icon: <path d="M5 2V8M2 5H8M7 7L9 8L13.500 12L12 13.500L8 9.500ZM10 9L9 10.500" /> },
  { name: '수평선 편집', icon: <path d="M2 4.500H8M7 7L9 8L13.500 12L12 13.500L8 9.500ZM10 9L9 10.500" /> },
  { name: '수직선 편집', icon: <path d="M4.500 2V8M7 7L9 8L13.500 12L12 13.500L8 9.500ZM10 9L9 10.500" /> },
  { name: '추세선', icon: <path d="M2.500 13.500L13.500 2.500" /> },
  { name: '자동 추세선', icon: <><path d="M6 6L11 1" /><text x="0" y="14" fontSize="8" fill="currentColor" stroke="none">AUTO</text></> },
  { name: '텍스트', icon: <><path d="M3 7V5.500H10V7M6.500 5.500V13M5 13H8.500" /><path d="M12.500 1V6M10 3.500H15" /></> },
  { name: '전체 삭제', icon: <><text x="1" y="7" fontSize="8" fill="currentColor" stroke="none">All</text><path d="M6 10.500L8.500 8H13.500V11L11 13.500H6ZM6 10.500H11V13.500M11 10.500L13.500 8" /></> },
  { name: '봉', icon: <><path d="M5 3V13M11 3V13" /><path d="M3 5H7V11H3ZM9 4.500H13V10H9Z" fill="currentColor" stroke="none" /></> },
  { name: '정보 조회', active: true, icon: <><circle cx="6" cy="8" r="3.500" /><path d="M8.500 10.500L11 13M13.500 2V3M13.500 4V8" /></> },
  { name: '목록 조회', icon: <><circle cx="6" cy="8" r="3.500" /><path d="M8.500 10.500L11 13M10 2.500H15M10 4.500H15M11 6.500H15" /></> },
  { name: '패턴 조회', icon: <><path d="M2 7L6 3L9 6L13 2.500M2 9.500H5M2 11.500H5M2 13.500H6" /><circle cx="9.500" cy="10" r="2.500" /><path d="M11.500 12L14 14" /></> },
  { name: '파동', icon: <path d="M2.500 13V7L5.500 11L8 8L10.500 11L13.500 7V13M5.500 7V2M3.500 4L5.500 2L7.500 4M10.500 2V7M8.500 5L10.500 7L12.500 5" /> },
  { name: '지그재그', icon: <path d="M3 3.500H13L3 13.500H13M3 8.500H13" /> },
  { name: '비율선', icon: <path d="M2.500 3V13M5.500 3V13M9.500 3V13M13.500 3V13" /> },
  { name: '등간격선', icon: <path d="M2.500 3V13M6.500 3V13M10.500 3V13M13.500 3V13" /> },
  { name: '실행 취소', icon: <path d="M5 11.500A4 4 0 1 0 4.500 7M3 9.500H7M5 7.500V11.500" /> },
  { name: '다시 실행', icon: <path d="M7 11.500A4 4 0 1 1 11.500 8.500M9 10.500H14M11.500 8V13" /> },
  { name: '돋보기', icon: <><circle cx="7" cy="7" r="4" /><path d="M10 10L13.500 13.500" /></> },
];

const DrawBar = () => (
  <nav className="mr-[6px] ml-[6px] flex w-[28px] shrink-0 flex-col self-start border border-[#c8c8c8] bg-[#fcfcfc] text-[#404040]">
    <div className="flex flex-col border-b border-[#c8c8c8]">
      <button type="button" aria-label="새로고침" className="flex h-[22px] items-center justify-center">
        <Glyph><path d="M3 6.500V4.500H11.500L13 6V9M5 2.500L3 4.500L5 6.500M13 9.500V11.500H5L3.500 10V8M11 9.500L13 11.500L11 13.500" /></Glyph>
      </button>
      <button type="button" aria-label="설정" className="flex h-[22px] items-center justify-center"><Gear /></button>
    </div>
    {drawTools.map((tool) => (
      <button
        key={tool.name}
        type="button"
        aria-label={tool.name}
        className={clsx('flex h-[22px] items-center justify-center', tool.active && 'mx-[2px] rounded-sm border border-[#c0c0c0] bg-[#efefef]')}
      >
        <Glyph>{tool.icon}</Glyph>
      </button>
    ))}
  </nav>
);

const App = () => (
  <div className="flex min-h-screen bg-[#128a45] text-[12px] leading-4 [font-family:'Noto_Sans_Mono_CJK_KR','Noto_Sans_CJK_KR',monospace]">
    <div className="flex min-w-0 flex-1 flex-col">
      <TitleBar />
      <div className="flex flex-1 flex-col bg-[#dddcd7]">
        <Toolbar />
        <div className="flex flex-1 pb-[6px] pl-[6px]">
          <Sidebar />
          <ChartPanel />
          <DrawBar />
        </div>
      </div>
      <footer className="flex h-[3px] border-t border-[#6a6a68] bg-[#f0f0f0]">
        <div className="w-[159px] border-r border-[#808080]" />
        <div className="w-[210px] bg-[#7c8c86]" />
      </footer>
    </div>
    <div className="mr-[2px] w-1 border-l-2 border-[#6a6a6c] bg-[#c4c4cc]" />
  </div>
);

export default App;
